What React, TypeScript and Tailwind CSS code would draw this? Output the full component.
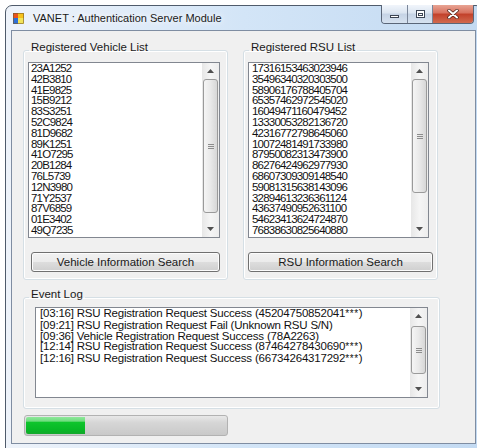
import React from "react"

const vehicles = [
    "23A1252", "42B3810", "41E9825", "15B9212", "83S3251", "52C9824", "81D9682", "89K1251",
    "41O7295", "20B1284", "76L5739", "12N3980", "71Y2537", "87V6859", "01E3402", "49Q7235",
]

const rsus = [
    "17316153463023946", "35496340320303500", "58906176788405704", "65357462972545020",
    "16049471160479452", "13330053282136720", "42316772798645060", "10072481491733980",
    "87950082313473900", "86276424962977930", "68607309309148540", "59081315638143096",
    "32894613236361124", "43637490952631100", "54623413624724870", "76838630825640880",
]

const eventos = [
    { texto: "[03:16] RSU Registration Request Success (45204750852041", oculto: true },
    { texto: "[09:21] RSU Registration Request Fail (Unknown RSU S/N)", oculto: false },
    { texto: "[09:36] Vehicle Registration Request Success (78A2263)", oculto: false },
    { texto: "[12:14] RSU Registration Request Success (87464278430690", oculto: true },
    { texto: "[12:16] RSU Registration Request Success (66734264317292", oculto: true },
]

const Flecha = ({ arriba }: { arriba?: boolean }) => {
    return <div className="h-[16px] flex items-center justify-center">
        <svg width="7" height="4" viewBox="0 0 7 4">
            <path d={arriba ? "M0 4L3.5 0L7 4Z" : "M0 0L7 0L3.5 4Z"} fill="#505050" />
        </svg>
    </div>
}

// barra de desplazamiento estilo Windows 7
const Barra = ({ hueco, pulgar }: { hueco: string, pulgar: string }) => {
    return <div className="w-[17px] shrink-0 flex flex-col bg-gradient-to-r from-[#e7e7e7] via-[#f5f5f5] to-[#ededed]">
        <Flecha arriba />
        <div className={hueco} />
        <div className={`${pulgar} mx-[1px] rounded-[3px] border border-[#9a9a9a] bg-gradient-to-r from-[#f5f5f5] via-[#e9e9e9] to-[#d7d7d7] flex flex-col items-center justify-center gap-[1px]`}>
            <div className="w-[6px] h-[1px] bg-[#8c8c8c]" />
            <div className="w-[6px] h-[1px] bg-[#8c8c8c]" />
            <div className="w-[6px] h-[1px] bg-[#8c8c8c]" />
        </div>
        <div className="flex-1" />
        <Flecha />
    </div>
}

const Caja = ({ clase, barra, children }: { clase: string, barra: React.ReactNode, children: React.ReactNode }) => {
    return <div className={`${clase} flex border border-[#828790] bg-white`}>
        {children}
        {barra}
    </div>
}

const Lista = ({ items, clase, texto, barra }: { items: string[], clase: string, texto: string, barra: React.ReactNode }) => {
    return <Caja clase={clase} barra={barra}>
        <div className={`flex-1 overflow-hidden text-[#111] ${texto}`}>
            {items.map(item => <div key={item} className="whitespace-nowrap">{item}</div>)}
        </div>
    </Caja>
}

const Boton = ({ texto, clase }: { texto: string, clase: string }) => {
    return <button className={`${clase} h-[20px] rounded-[3px] border border-[#707070] bg-[linear-gradient(#f2f2f2_0%,#ebebeb_50%,#dddddd_51%,#cfcfcf_100%)] shadow-[inset_0_0_0_1px_#fcfcfc] text-[11.5px] leading-[18px] text-[#1a1a1a]`}>
        {texto}
    </button>
}

const Grupo = ({ titulo, clase, leyenda, children }: { titulo: string, clase: string, leyenda: string, children: React.ReactNode }) => {
    return <fieldset className={`${clase} border border-[#d5dfe5] rounded-[3px] shadow-[inset_0_0_0_1px_#ffffff]`}>
        <legend className={`${leyenda} px-[2px] pb-[6px] text-[11.5px] leading-[13px] text-[#1a1a1a]`}>{titulo}</legend>
        {children}
    </fieldset>
}

const App = () => {
    return <div className="w-[477px] h-[448px] overflow-hidden bg-white pl-[5px] pt-[5px] font-['Liberation_Sans',Arial,sans-serif]">
        <div className="w-[478px] h-[450px] flex flex-col rounded-t-[7px] border border-[#4f5b6b] bg-gradient-to-r from-[#eef3fa] via-[#d3e5f7] to-[#c3daf2] px-[5px]">
            <div className="h-[24px] shrink-0 flex items-start justify-between">
                <div className="flex items-center h-full pl-[2px] gap-[9px]">
                    <svg width="11" height="11" viewBox="0 0 11 11">
                        <rect x="0" y="0" width="6" height="6" fill="#e8541f" />
                        <rect x="5" y="0" width="6" height="6" fill="#f6c21b" />
                        <rect x="0" y="5" width="6" height="6" fill="#2f6fd6" />
                        <rect x="5" y="5" width="6" height="6" fill="#f2e45a" />
                        <rect x="0.5" y="0.5" width="10" height="10" fill="none" stroke="#7a5a2a" strokeWidth="0.6" />
                    </svg>
                    <span className="text-[11px] text-[#1a1a1a] [text-shadow:0_0_6px_#fff,0_0_10px_#fff]">VANET : Authentication Server Module</span>
                </div>
                <div className="flex -mt-[1px] mr-[3px] rounded-b-[4px] border border-t-0 border-[#5a6678] overflow-hidden">
                    <div className="w-[26px] h-[18px] flex items-end justify-center pb-[5px] border-r border-[#7a8699] bg-[linear-gradient(#f1f5fb_0%,#dbe5f1_45%,#c5d3e5_50%,#d6e2f0_100%)]">
                        <div className="w-[9px] h-[3px] border border-[#3c4554] bg-white" />
                    </div>
                    <div className="w-[25px] h-[18px] flex items-center justify-center border-r border-[#7a8699] bg-[linear-gradient(#f1f5fb_0%,#dbe5f1_45%,#c5d3e5_50%,#d6e2f0_100%)]">
                        <div className="w-[9px] h-[8px] border border-[#3c4554] bg-white flex items-center justify-center">
                            <div className="w-[5px] h-[3px] border border-[#3c4554]" />
                        </div>
                    </div>
                    <div className="w-[40px] h-[18px] flex items-center justify-center bg-[linear-gradient(#e8a494_0%,#d7705d_45%,#c2402a_50%,#d16a4f_100%)]">
                        <svg width="12" height="10" viewBox="0 0 12 10">
                            <path d="M2 1.5L10 8.5M10 1.5L2 8.5" stroke="#4a2018" strokeWidth="3.4" strokeLinecap="round" />
                            <path d="M2 1.5L10 8.5M10 1.5L2 8.5" stroke="#ffffff" strokeWidth="2" strokeLinecap="round" />
                        </svg>
                    </div>
                </div>
            </div>

            <div className="w-[465px] h-[414px] shrink-0 border border-[#7f8da2] bg-[#f0f0f0] pl-[11px] pt-[10px]">
                <div className="flex gap-[15px]">
                    <Grupo titulo="Registered Vehicle List" clase="w-[205px] h-[239px] px-[4px]" leyenda="ml-[1px]">
                        <Lista items={vehicles} clase="w-[192px] h-[176px] mt-[2px]"
                            texto="pl-[2px] text-[11.5px] leading-[10.8px] tracking-[-0.8px]"
                            barra={<Barra hueco="h-0" pulgar="h-[134px]" />} />
                        <Boton texto="Vehicle Information Search" clase="w-[189px] ml-[3px] mt-[14px]" />
                    </Grupo>
                    <Grupo titulo="Registered RSU List" clase="w-[195px] h-[239px] px-[4px]" leyenda="ml-[1px]">
                        <Lista items={rsus} clase="w-[181px] h-[176px] mt-[2px]"
                            texto="pl-[3px] text-[11.5px] leading-[10.8px] tracking-[-0.8px]"
                            barra={<Barra hueco="h-0" pulgar="h-[114px]" />} />
                        <Boton texto="RSU Information Search" clase="w-[185px] mt-[14px]" />
                    </Grupo>
                </div>

                <Grupo titulo="Event Log" clase="w-[415px] h-[121px] mt-[8px] px-[11px]" leyenda="-ml-[6px]">
                    <Caja clase="w-[393px] h-[91px]" barra={<Barra hueco="h-[2px]" pulgar="h-[48px]" />}>
                        <div className="flex-1 overflow-hidden text-[#111] pl-[4px] text-[11.5px] leading-[10.75px] tracking-[-0.2px]">
                            {eventos.map(ev => <div key={ev.texto} className="whitespace-nowrap">
                                {ev.texto}
                                {ev.oculto && <><span className="text-[10px] tracking-[0.6px]">***</span>)</>}
                            </div>)}
                        </div>
                    </Caja>
                </Grupo>

                <div className="w-[204px] h-[21px] ml-[1px] mt-[6px] rounded-[3px] border border-[#b2b2b2] bg-[linear-gradient(#e8e8e8_0%,#d6d6d6_35%,#c9c9c9_100%)] flex p-[1px]">
                    <div className="w-[59px] h-full rounded-l-[2px] bg-[linear-gradient(#8fe89b_0%,#6fdc7e_25%,#0fc52c_30%,#08b826_75%,#14a82c_100%)]" />
                </div>
            </div>
        </div>
    </div>
}

export default App
